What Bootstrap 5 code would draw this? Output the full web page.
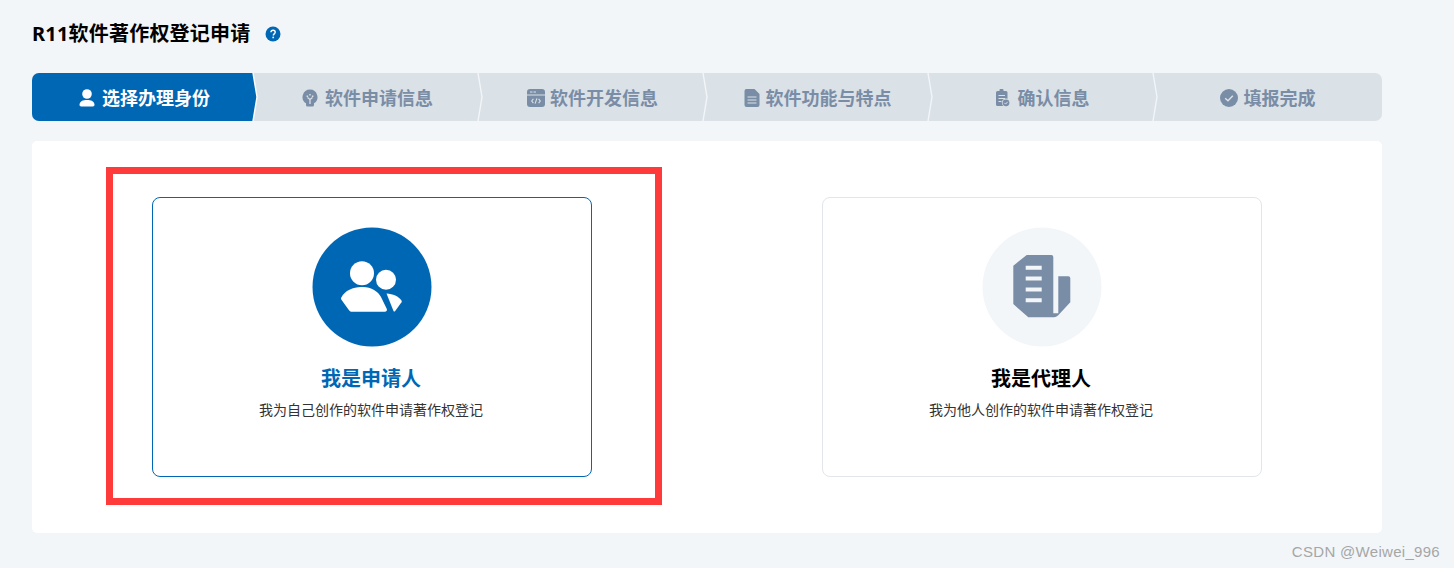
<!DOCTYPE html>
<html lang="zh-CN">
<head>
  <meta charset="UTF-8" />
  <meta name="viewport" content="width=device-width, initial-scale=1.0"/>
  <title>R11软件著作权登记申请</title>
  <link rel="stylesheet" href="https://cdn.jsdelivr.net/npm/bootstrap@5.3.0/dist/css/bootstrap.min.css">
  <style>
    body {
      background-color: #f2f6f9;
      font-family: "Noto Sans", "Noto Sans CJK SC", sans-serif;
      color: #000;
    }
    .page-wrap { width: 1350px; margin-left: 32px; padding-top: 21px; }
    .page-title { font-size: 20px; font-weight: 700; line-height: 26px; margin: 0; letter-spacing: .2px; }
    .help-icon { width: 16px; height: 16px; margin-left: 15px; }
    .steps {
      height: 48px;
      margin-top: 26px;
      background-color: #dae1e7;
      border-radius: 7px;
      overflow: hidden;
    }
    .step-item {
      flex: 0 0 225px;
      position: relative;
      color: #7a8da6;
      font-size: 18px;
      font-weight: 700;
      gap: 7px;
      padding: 2px 4px 0 0;
    }
    .step-item.is-active { padding: 2px 0 0 0; }
    .step-item > span, .step-item > .step-icon { position: relative; z-index: 1; }
    .step-icon { width: 16px; height: 18px; fill: #7a8da6; flex: none; margin-top: -1px; }
    .step-item.is-active { color: #fff; }
    .step-item.is-active .step-icon { fill: #fff; }
    .step-item.is-active::before {
      content: "";
      position: absolute;
      inset: 0;
      background-color: #0067b5;
      clip-path: polygon(0 0, calc(100% - 4px) 0, 100% 50%, calc(100% - 4px) 100%, 0 100%);
    }
    .step-sep { position: absolute; right: -1px; top: 0; width: 6px; height: 48px; z-index: 2; }
    .panel-box {
      margin-top: 20px;
      height: 392px;
      background-color: #fff;
      border-radius: 5px;
      padding: 56px 120px;
    }
    .choice-box {
      width: 440px;
      height: 280px;
      padding-top: 30px;
      border: 1px solid #e2e5ea;
      border-radius: 8px;
      position: relative;
    }
    .choice-box.is-selected { border-color: #0067b5; }
    .choice-box.is-selected::after {
      content: "";
      position: absolute;
      left: -47px;
      right: -71px;
      top: -31px;
      bottom: -29px;
      border: 7px solid #ff3a3a;
    }
    .choice-circle { width: 120px; height: 120px; display: block; margin: -1px auto 0 159px; }
    .choice-name { font-size: 20px; font-weight: 700; line-height: 28px; margin: 18px 2px 0 0; }
    .is-selected .choice-name { color: #0067b5; }
    .choice-desc { font-size: 14px; line-height: 20px; margin: 7px 2px 0 0; color: #333; }
    .watermark {
      width: 1440px;
      padding-top: 8px;
      font-size: 15px;
      line-height: 22px;
      color: #a6a6a6;
      letter-spacing: .3px;
      font-family: "Liberation Sans", sans-serif;
    }
  </style>
</head>
<body>
  <div class="page-wrap">
    <div class="d-flex align-items-center">
      <h1 class="page-title">R11软件著作权登记申请</h1>
      <svg class="help-icon" viewBox="0 0 16 16">
        <circle cx="8" cy="8" r="7.5" fill="#0067b5"/>
        <path d="M5.9 6.300C6 5 6.900 4.300 8.100 4.300s2.100.8 2.100 1.900c0 1.600-1.900 1.700-1.900 3.200" fill="none" stroke="#fff" stroke-width="1.400"/>
        <circle cx="8.200" cy="11.400" r=".9" fill="#fff"/>
      </svg>
    </div>

    <!-- steps -->
    <div class="steps d-flex">
      <div class="step-item is-active d-flex align-items-center justify-content-center">
        <svg class="step-icon" viewBox="0 0 16 18"><circle cx="8" cy="5" r="4.800"/><path d="M.5 15.500C.8 12.300 3.800 11 8 11s7.200 1.300 7.500 4.500c.1 1.300-.6 2-1.700 2H2.200c-1.100 0-1.800-.7-1.700-2z"/></svg>
        <span>选择办理身份</span>
        <svg class="step-sep" viewBox="0 0 6 48"><path d="M1 0l4 24-4 24" fill="none" stroke="#fff" stroke-width="1.400"/></svg>
      </div>
      <div class="step-item d-flex align-items-center justify-content-center">
        <svg class="step-icon" viewBox="0 0 16 18"><path d="M8 .5A7.500 7.500 0 0 0 4 14.300V16c0 .8.600 1.500 1.500 1.500h5c.9 0 1.500-.7 1.500-1.500v-1.700A7.500 7.500 0 0 0 8 .5z"/><path d="M5.500 8.500L8 10.500l2.500-2M8 10.500v4.500" fill="none" stroke="#dae1e7" stroke-width="1.300"/><path d="M4.600 6.400h1.500v1.500H4.600zM7.250 5h1.500v1.500h-1.500zM9.900 6.400h1.500v1.500H9.900z" fill="#dae1e7"/></svg>
        <span>软件申请信息</span>
        <svg class="step-sep" viewBox="0 0 6 48"><path d="M1 0l4 24-4 24" fill="none" stroke="#f2f6f9" stroke-width="1.400"/></svg>
      </div>
      <div class="step-item d-flex align-items-center justify-content-center" style="gap:5px">
        <svg class="step-icon" style="width:18px" viewBox="0 0 18 18"><rect width="18" height="18" rx="3"/><path d="M0 6h18" stroke="#dae1e7" stroke-width="1"/><path d="M3 3h2.500M6.500 3H9" stroke="#dae1e7" stroke-width="1"/><path d="M6.400 9.800L4.700 12l1.700 2.200M11.600 9.800l1.700 2.200-1.700 2.200M9.900 9.300l-1.800 5.400" fill="none" stroke="#dae1e7" stroke-width="1.100"/></svg>
        <span>软件开发信息</span>
        <svg class="step-sep" viewBox="0 0 6 48"><path d="M1 0l4 24-4 24" fill="none" stroke="#f2f6f9" stroke-width="1.400"/></svg>
      </div>
      <div class="step-item d-flex align-items-center justify-content-center" style="gap:6px">
        <svg class="step-icon" viewBox="0 0 16 18"><path d="M2 0h8.500L15.500 5v11a2 2 0 0 1-2 2h-11a2 2 0 0 1-2-2V2A2 2 0 0 1 2 0z"/><path d="M3.500 8h9M3.500 11h9M3.500 14h9" stroke="#dae1e7" stroke-width="1.200"/></svg>
        <span>软件功能与特点</span>
        <svg class="step-sep" viewBox="0 0 6 48"><path d="M1 0l4 24-4 24" fill="none" stroke="#f2f6f9" stroke-width="1.400"/></svg>
      </div>
      <div class="step-item d-flex align-items-center justify-content-center" style="gap:8px">
        <svg class="step-icon" style="width:14px" viewBox="0 0 14 18"><path d="M4.500 0h2a1 1 0 0 1 1 1v1H10a1.500 1.500 0 0 1 1.500 1.500V17H1.500A1.500 1.500 0 0 1 0 15.500v-12A1.500 1.500 0 0 1 1.500 2h2V1a1 1 0 0 1 1-1z"/><path d="M2.500 6.500h6.500M2.500 9.500h6.500M2.500 12.500h3" stroke="#dae1e7" stroke-width="1.200"/><circle cx="10" cy="13.800" r="4.200" fill="#dae1e7"/><circle cx="10" cy="13.800" r="3.400"/><path d="M8.300 13.800l1.300 1.300 2.100-2.300" fill="none" stroke="#dae1e7" stroke-width="1"/></svg>
        <span>确认信息</span>
        <svg class="step-sep" viewBox="0 0 6 48"><path d="M1 0l4 24-4 24" fill="none" stroke="#f2f6f9" stroke-width="1.400"/></svg>
      </div>
      <div class="step-item d-flex align-items-center justify-content-center" style="gap:6px">
        <svg class="step-icon" style="width:18px" viewBox="0 0 18 18"><circle cx="9" cy="9" r="9"/><path d="M5.200 9.200l2.800 2.600 4.800-5" fill="none" stroke="#dae1e7" stroke-width="1.500"/></svg>
        <span>填报完成</span>
      </div>
    </div>

    <!-- choices -->
    <div class="panel-box d-flex justify-content-between">
      <div class="choice-box is-selected text-center">
        <svg class="choice-circle" viewBox="0 0 120 120">
          <circle cx="60" cy="60" r="59.500" fill="#0067b5"/>
          <g fill="#fff">
            <circle cx="50" cy="46.300" r="12"/>
            <circle cx="74" cy="52.700" r="10"/>
            <path d="M29.300 70.500C33 63.500 41 60 49 60h2c8.500 0 15 4.500 18 10l5.600 11.500c1 2 0 3.200-2 3.200H40c-1.300 0-2-.3-2.800-1.200l-7.600-10.500c-.7-1-.8-1.800-.3-2.500z"/>
            <path d="M74.500 66.500c6.500.3 12 3 15 7 .4.6.4 1.100 0 1.700l-6.500 9c-.5.6-1.100.5-1.500-.2z"/>
          </g>
        </svg>
        <p class="choice-name">我是申请人</p>
        <p class="choice-desc">我为自己创作的软件申请著作权登记</p>
      </div>
      <div class="choice-box text-center">
        <svg class="choice-circle" viewBox="0 0 120 120">
          <circle cx="60" cy="60" r="59.500" fill="#f2f6f9"/>
          <path fill="#7a8da6" d="M44.700 28H69.300a2 2 0 0 1 2 2V86.300h5V49.300H86.300a2 2 0 0 1 2 2V75.300L76 88.500q-1.800 1.800-4 1.800H46.300L31.300 77V38.700z"/>
          <path fill="#f2f6f9" d="M43.700 38.700h16v4h-16zM43.700 49.500h16v4h-16zM43.700 60.500h16v4h-16zM43.700 71.200h16v4h-16z"/>
        </svg>
        <p class="choice-name">我是代理人</p>
        <p class="choice-desc">我为他人创作的软件申请著作权登记</p>
      </div>
    </div>
  </div>
  <div class="watermark text-end">CSDN @Weiwei_996</div>
</body>
</html>
